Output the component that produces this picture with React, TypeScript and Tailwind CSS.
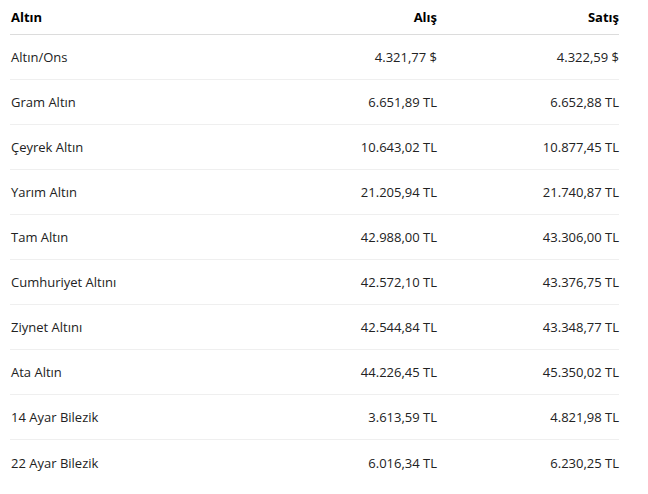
const rows = [
  { name: 'Altın/Ons', buy: '4.321,77 $', sell: '4.322,59 $' },
  { name: 'Gram Altın', buy: '6.651,89 TL', sell: '6.652,88 TL' },
  { name: 'Çeyrek Altın', buy: '10.643,02 TL', sell: '10.877,45 TL' },
  { name: 'Yarım Altın', buy: '21.205,94 TL', sell: '21.740,87 TL' },
  { name: 'Tam Altın', buy: '42.988,00 TL', sell: '43.306,00 TL' },
  { name: 'Cumhuriyet Altını', buy: '42.572,10 TL', sell: '43.376,75 TL' },
  { name: 'Ziynet Altını', buy: '42.544,84 TL', sell: '43.348,77 TL' },
  { name: 'Ata Altın', buy: '44.226,45 TL', sell: '45.350,02 TL' },
  { name: '14 Ayar Bilezik', buy: '3.613,59 TL', sell: '4.821,98 TL' },
  { name: '22 Ayar Bilezik', buy: '6.016,34 TL', sell: '6.230,25 TL' },
]

export default function App() {
  return (
    <div className="min-h-[494px] bg-white pl-[10px] font-['Open_Sans',sans-serif] text-[13px] text-[#222]">
      <div className="w-[609px]">
        <div className="grid h-[35px] grid-cols-[245px_182px_182px] items-center border-b border-[#dcdcdc] pt-[2px] font-bold text-black">
          <span className="pl-px">Altın</span>
          <span className="text-right">Alış</span>
          <span className="text-right">Satış</span>
        </div>
        {rows.map((row, i) => (
          <div
            key={row.name}
            className={`grid h-[45px] grid-cols-[245px_182px_182px] items-center pt-[2px] ${
              i < rows.length - 1 ? 'border-b border-[#efefef]' : ''
            }`}
          >
            <span className="pl-px">{row.name}</span>
            <span className="text-right">{row.buy}</span>
            <span className="text-right">{row.sell}</span>
          </div>
        ))}
      </div>
    </div>
  )
}
